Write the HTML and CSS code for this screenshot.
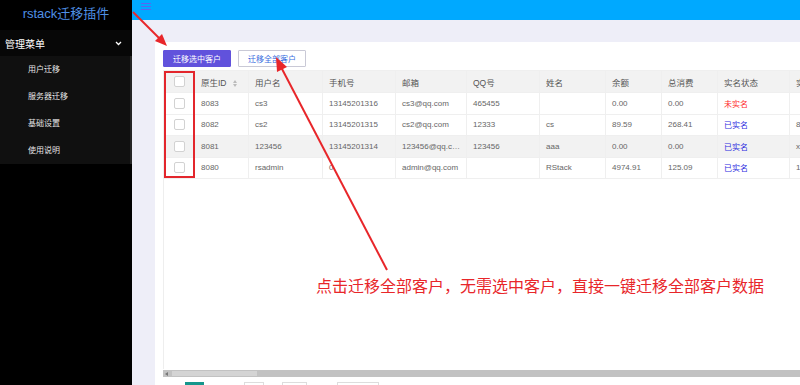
FILE: index.html
```html
<!DOCTYPE html>
<html lang="zh-CN">
<head>
    <meta charset="UTF-8">
    <title>rstack迁移插件</title>
    <link rel="stylesheet" href="styles.css">
</head>
<body>
    <aside class="sidebar">
        <div class="brand">rstack迁移插件</div>
        <div class="menu-title">
            <span>管理菜单</span>
            <svg class="chevron" width="7" height="5" viewBox="0 0 7 5"><path d="M1 1 L3.5 3.5 L6 1" fill="none" stroke="#fff" stroke-width="1.3"/></svg>
        </div>
        <ul class="submenu">
            <li>用户迁移</li>
            <li>服务器迁移</li>
            <li>基础设置</li>
            <li>使用说明</li>
        </ul>
    </aside>

    <div class="main">
        <div class="topbar">
            <span class="burger"><i></i><i></i><i></i></span>
        </div>
        <div class="content">
            <div class="card">
                <div class="toolbar">
                    <button class="btn btn-primary">迁移选中客户</button>
                    <button class="btn btn-outline">迁移全部客户</button>
                </div>

                <div class="table-wrap">
                    <table class="user-table">
                        <colgroup>
                            <col style="width:30px"><col style="width:54px"><col style="width:74px">
                            <col style="width:73px"><col style="width:71px"><col style="width:73px">
                            <col style="width:66px"><col style="width:56px"><col style="width:56px">
                            <col style="width:72px"><col style="width:80px">
                        </colgroup>
                        <thead>
                            <tr>
                                <th class="cb-cell"><span class="cb"></span></th>
                                <th>原生ID <span class="sort"><b class="up"></b><b class="down"></b></span></th>
                                <th>用户名</th>
                                <th>手机号</th>
                                <th>邮箱</th>
                                <th>QQ号</th>
                                <th>姓名</th>
                                <th>余额</th>
                                <th>总消费</th>
                                <th>实名状态</th>
                                <th>实名信息</th>
                            </tr>
                        </thead>
                        <tbody>
                            <tr>
                                <td class="cb-cell"><span class="cb"></span></td>
                                <td>8083</td><td>cs3</td><td>13145201316</td><td>cs3@qq.com</td>
                                <td>465455</td><td></td><td>0.00</td><td>0.00</td>
                                <td class="unverified">未实名</td><td></td>
                            </tr>
                            <tr>
                                <td class="cb-cell"><span class="cb"></span></td>
                                <td>8082</td><td>cs2</td><td>13145201315</td><td>cs2@qq.com</td>
                                <td>12333</td><td>cs</td><td>89.59</td><td>268.41</td>
                                <td class="verified">已实名</td><td>888888</td>
                            </tr>
                            <tr class="hover">
                                <td class="cb-cell"><span class="cb"></span></td>
                                <td>8081</td><td>123456</td><td>13145201314</td><td>123456@qq.com</td>
                                <td>123456</td><td>aaa</td><td>0.00</td><td>0.00</td>
                                <td class="verified">已实名</td><td>xxxxxx</td>
                            </tr>
                            <tr>
                                <td class="cb-cell"><span class="cb"></span></td>
                                <td>8080</td><td>rsadmin</td><td>0</td><td>admin@qq.com</td>
                                <td></td><td>RStack</td><td>4974.91</td><td>125.09</td>
                                <td class="verified">已实名</td><td>123456</td>
                            </tr>
                        </tbody>
                    </table>
                    <div class="mark-box"></div>
                </div>

                <div class="hscroll">
                    <span class="hscroll-arrow"></span>
                    <span class="hscroll-thumb"></span>
                </div>

                <div class="pager">
                    <span class="page current"></span>
                    <span class="page p1"></span>
                    <span class="page p2"></span>
                    <span class="page p3"></span>
                </div>
            </div>
        </div>
    </div>

    <!-- red annotation arrows drawn over the screenshot -->
    <svg class="notes" width="800" height="385" viewBox="0 0 800 385">
        <line x1="133" y1="12" x2="160" y2="39" stroke="#e8262a" stroke-width="2"/>
        <polygon points="167,46 155,41 162,34" fill="#e8262a"/>
        <line x1="387" y1="270" x2="281" y2="67" stroke="#e8262a" stroke-width="2"/>
        <polygon points="276,57 277,72 287,67" fill="#e8262a"/>
    </svg>
    <p class="note-text">点击迁移全部客户，无需选中客户，直接一键迁移全部客户数据</p>
</body>
</html>
```

FILE: styles.css
```css
body {
    margin: 0;
    width: 800px;
    height: 385px;
    overflow: hidden;
    display: flex;
    font-family: "Liberation Sans", "Noto Sans CJK SC", sans-serif;
    position: relative;
}
.sidebar {
    width: 132px;
    flex-shrink: 0;
    background: #000;
    color: #fff;
}
.brand {
    height: 30px;
    line-height: 27px;
    text-align: center;
    font-size: 13px;
    color: #4f90e6;
}
.menu-title {
    height: 26px;
    padding: 0 10px 0 5px;
    display: flex;
    align-items: center;
    justify-content: space-between;
    font-size: 10px;
    background: #070707;
}
.submenu {
    list-style: none;
    margin: 0;
    padding: 0;
    background: #101010;
    border-right: 2px solid #262626;
}
.submenu li {
    height: 27px;
    line-height: 27px;
    padding-left: 28px;
    font-size: 8px;
    color: #e6e6e6;
}
.main {
    flex: 1;
    min-width: 0;
    height: 385px;
    display: flex;
    flex-direction: column;
}
.topbar {
    height: 20px;
    flex-shrink: 0;
    background: #00a9ff;
    padding-left: 9px;
    display: flex;
    align-items: flex-start;
}
.burger {
    display: flex;
    flex-direction: column;
    gap: 2px;
    margin-top: 3px;
    width: 10px;
}
.burger i {
    height: 1px;
    background: #5a64f2;
}
.content {
    flex: 1;
    min-height: 0;
    overflow: hidden;
    background: #eeeef8;
    padding: 22px 0 0 23px;
    display: flex;
}
.card {
    flex: 1;
    background: #fff;
    padding: 8px 0 0 8px;
    display: flex;
    flex-direction: column;
    min-width: 0;
}
.toolbar {
    display: flex;
    gap: 7px;
    margin-bottom: 3px;
    flex-shrink: 0;
}
.btn {
    height: 17px;
    width: 68px;
    padding: 0;
    font-family: "Noto Sans CJK SC", sans-serif;
    font-size: 8px;
    border-radius: 1px;
}
.btn-primary {
    background: #6152dc;
    border: 1px solid #6152dc;
    color: #fff;
}
.btn-outline {
    background: #fff;
    border: 1px solid #c9c9d6;
    color: #3a6ee0;
}
.table-wrap {
    position: relative;
    height: 299px;
    flex-shrink: 0;
    overflow: hidden;
    border-left: 1px solid #eee;
}
.user-table {
    table-layout: fixed;
    width: 705px;
    border-collapse: collapse;
    font-size: 8px;
    color: #666;
}
.user-table th,
.user-table td {
    padding: 0 4px 0 6px;
    text-align: left;
    white-space: nowrap;
    overflow: hidden;
    text-overflow: ellipsis;
    border: 1px solid #efefef;
}
.user-table th {
    height: 21px;
    background: #f2f2f2;
    font-weight: normal;
    color: #555;
    font-size: 8.5px;
}
.user-table td {
    height: 20.5px;
}
.user-table tr.hover td {
    background: #f2f2f2;
}
.user-table .cb-cell {
    padding: 0;
    text-align: center;
}
.cb {
    display: inline-block;
    width: 9px;
    height: 9px;
    border: 1px solid #d2d2d2;
    border-radius: 2px;
    background: #fff;
    vertical-align: middle;
}
.sort {
    display: inline-flex;
    flex-direction: column;
    gap: 1px;
    margin-left: 4px;
    vertical-align: middle;
}
.sort b {
    width: 0;
    height: 0;
    border-left: 2.5px solid transparent;
    border-right: 2.5px solid transparent;
}
.sort .up { border-bottom: 3px solid #bbb; }
.sort .down { border-top: 3px solid #bbb; }
.unverified { color: #ff2a2a; }
.verified { color: #2d2de0; }
.mark-box {
    position: absolute;
    left: 0;
    top: 1px;
    width: 27px;
    height: 103px;
    border: 2px solid #e3262c;
}
.hscroll {
    height: 7px;
    flex-shrink: 0;
    margin-top: 1px;
    background: #c2c2c2;
    display: flex;
    align-items: center;
}
.hscroll-arrow {
    width: 0;
    height: 0;
    margin-left: 2px;
    border-top: 2px solid transparent;
    border-bottom: 2px solid transparent;
    border-right: 3px solid #777;
}
.hscroll-thumb {
    width: 85px;
    height: 5px;
    margin-left: 4px;
    background: #d4d4d4;
}
.pager {
    display: flex;
    flex-shrink: 0;
    margin-top: 5px;
    padding-left: 22px;
    height: 12px;
}
.page {
    height: 12px;
    border: 1px solid #ddd;
    background: #fff;
}
.page.current {
    width: 17px;
    border-color: #16968c;
    background: #16968c;
}
.page.p1 { width: 18px; margin-left: 40px; }
.page.p2 { width: 23px; margin-left: 18px; }
.page.p3 { width: 40px; margin-left: 30px; }
.notes {
    position: absolute;
    left: 0;
    top: 0;
    pointer-events: none;
}
.note-text {
    position: absolute;
    left: 316px;
    top: 273px;
    margin: 0;
    font-family: "Noto Sans CJK SC", sans-serif;
    font-size: 16px;
    color: #e8262a;
    white-space: nowrap;
}
```
